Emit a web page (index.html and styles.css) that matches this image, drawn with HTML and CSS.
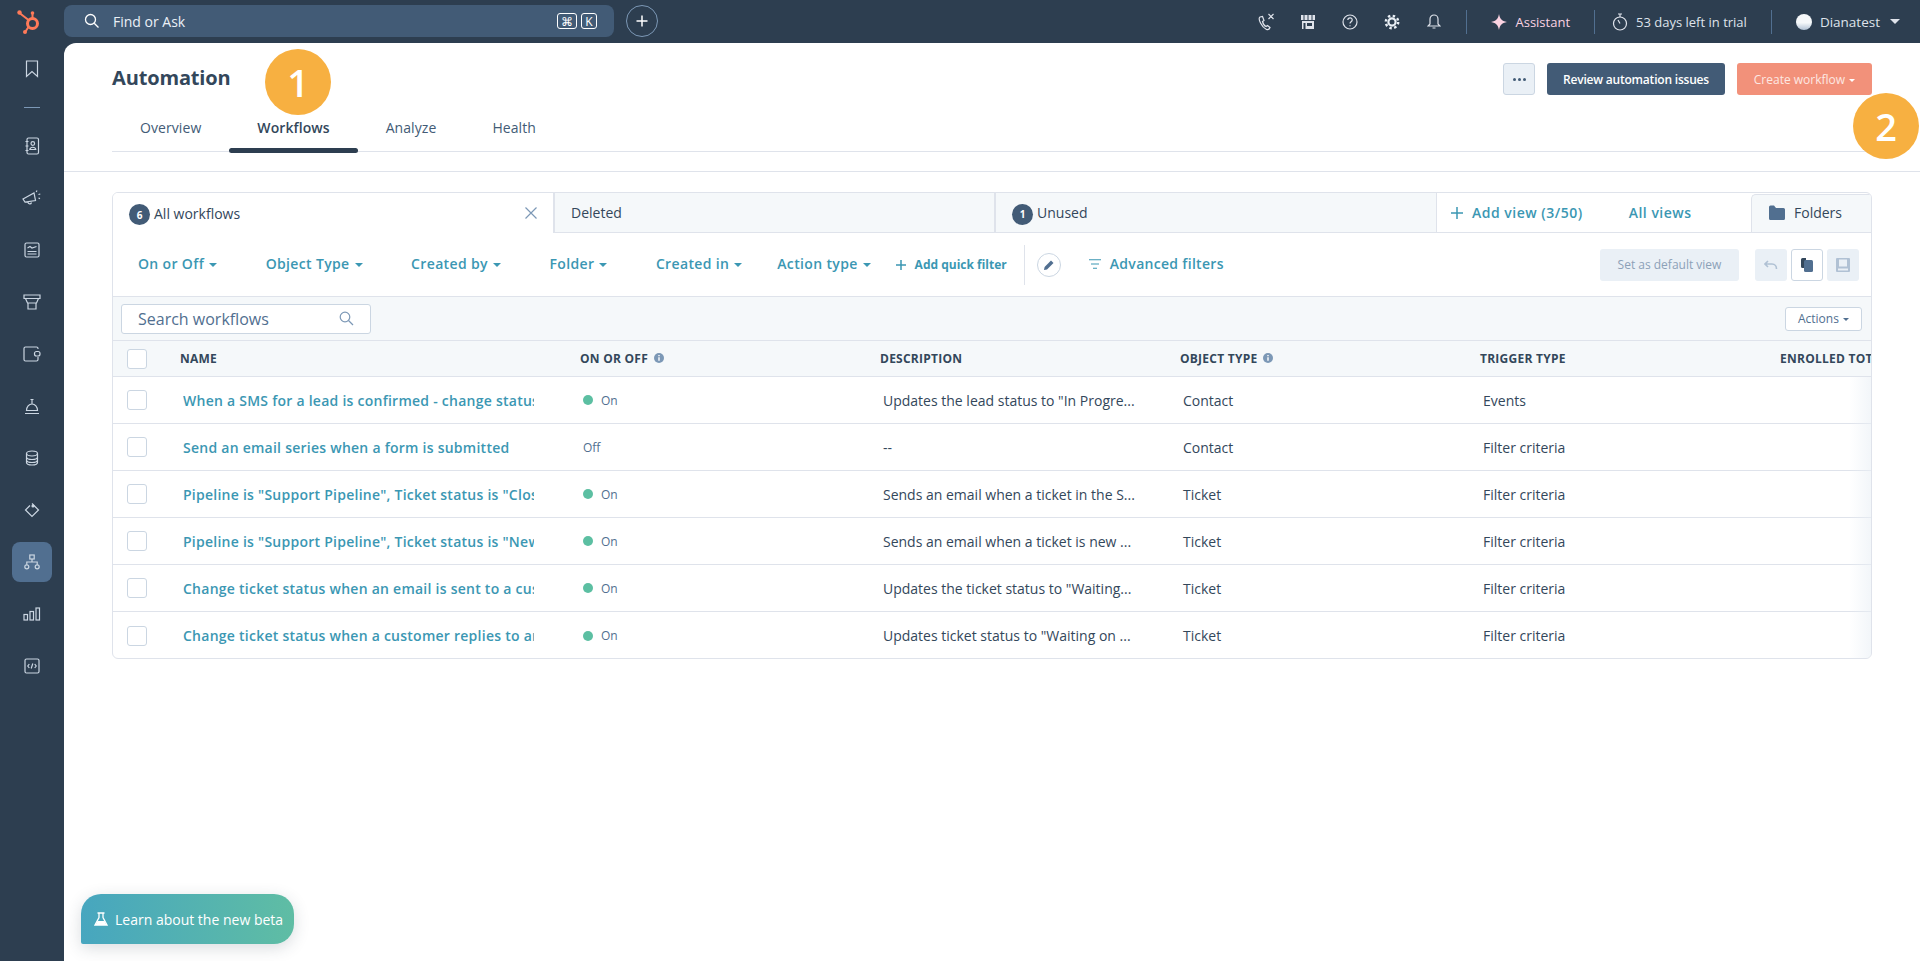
FILE: index.html
```html
<!DOCTYPE html>
<html>
<head>
    <title>Automation</title>
    <link rel="stylesheet" href="styles.css">
</head>
<body>
<div class="app">
    <aside class="sidebar">
        <div class="logo">
            <svg width="26" height="28" viewBox="0 0 26 28" fill="none" stroke="#ff7a59">
                <circle cx="16.5" cy="15.5" r="5" stroke-width="3"/>
                <path d="M3.5 5l9 7M16.500 5v6M12.500 19l-3 4.500" stroke-width="2"/>
                <circle cx="3.500" cy="4.500" r="2.200" fill="#ff7a59" stroke="none"/>
                <circle cx="16.500" cy="5" r="1.800" fill="#ff7a59" stroke="none"/>
                <circle cx="9" cy="24" r="2" fill="#ff7a59" stroke="none"/>
            </svg>
        </div>
        <a class="nav-item">
            <svg width="14" height="18" viewBox="0 0 14 18" class="ico"><path d="M1.500 1h11v15.500L7 11.500l-5.500 5z"/></svg>
        </a>
        <div class="nav-divider"></div>
        <a class="nav-item">
            <svg width="16" height="18" viewBox="0 0 16 18" class="ico"><rect x="3" y="1" width="11.500" height="16" rx="1.500"/><circle cx="8.800" cy="6.500" r="1.800"/><path d="M5.800 12.500c.5-3 5.500-3 6 0zM1.500 4.500h3M1.500 9h3M1.500 13.500h3"/></svg>
        </a>
        <a class="nav-item">
            <svg width="20" height="18" viewBox="0 0 20 18" class="ico"><path d="M1 10l11-6 1.500 7.500-10.500 1.500zM6 13c0 2.500 3 2.500 3.500.5M15 1.500l-.8 1.500M16.500 5.500l1.800-.5M16.500 9l1.500.6"/></svg>
        </a>
        <a class="nav-item">
            <svg width="16" height="16" viewBox="0 0 16 16" class="ico"><rect x="1" y="1" width="14" height="14" rx="1.500"/><path d="M3.500 6l2.500-1.500 2 1.500 4.500-1.500M3.500 9.500h9M3.500 12h9"/></svg>
        </a>
        <a class="nav-item">
            <svg width="18" height="18" viewBox="0 0 18 18" class="ico"><path d="M1 2h16v3.500H1zM2.500 5.500L4.500 10h9l2-4.500M5 10v6h8v-6"/></svg>
        </a>
        <a class="nav-item">
            <svg width="18" height="16" viewBox="0 0 18 16" class="ico"><path d="M15 3V2.500A1.500 1.500 0 0 0 13.500 1h-11A1.500 1.500 0 0 0 1 2.500v11A1.500 1.500 0 0 0 2.500 15h11a1.500 1.500 0 0 0 1.500-1.500V11"/><rect x="11.500" y="5.500" width="5.500" height="4.500" rx="2"/></svg>
        </a>
        <a class="nav-item">
            <svg width="16" height="18" viewBox="0 0 16 18" class="ico"><path d="M2.500 13.500a5.500 6.500 0 0 1 11 0zM1 16.500h14M8 7V3M6.500 2.500h3"/></svg>
        </a>
        <a class="nav-item">
            <svg width="14" height="16" viewBox="0 0 14 16" class="ico"><ellipse cx="7" cy="3.500" rx="5.500" ry="2.500"/><path d="M1.500 3.500v9c0 1.400 2.500 2.500 5.500 2.500s5.500-1.100 5.500-2.500v-9M1.500 7c0 1.400 2.500 2.500 5.500 2.500s5.500-1.100 5.500-2.500M1.500 10c0 1.400 2.500 2.500 5.500 2.500s5.500-1.100 5.500-2.500"/></svg>
        </a>
        <a class="nav-item">
            <svg width="16" height="16" viewBox="0 0 16 16" class="ico"><path d="M8 1.500L14.500 8 8 14.500 1.500 8 6 3.500"/><circle cx="9" cy="4" r="1" fill="#fff"/></svg>
        </a>
        <a class="nav-item active">
            <svg width="16" height="16" viewBox="0 0 16 16" class="ico"><rect x="5.800" y="1" width="4.400" height="4"/><circle cx="2.800" cy="12.800" r="2"/><circle cx="13.200" cy="12.800" r="2"/><path d="M8 5v3M2.800 10.800V8h10.400v2.800"/></svg>
        </a>
        <a class="nav-item">
            <svg width="18" height="14" viewBox="0 0 18 14" class="ico"><rect x="1" y="7.500" width="3.500" height="5.500"/><rect x="7" y="4.500" width="3.500" height="8.500"/><rect x="13" y="1" width="3.500" height="12"/></svg>
        </a>
        <a class="nav-item">
            <svg width="16" height="16" viewBox="0 0 16 16" class="ico"><rect x="1" y="1" width="14" height="14" rx="1.500"/><path d="M5.300 6L3.800 8l1.500 2M10.700 6l1.500 2-1.500 2M8.800 5.500l-1.600 5"/></svg>
        </a>
    </aside>

    <div class="content">
        <header class="topbar">
            <div class="global-search">
                <svg width="16" height="16" viewBox="0 0 16 16" class="search-ico"><circle cx="6.500" cy="6.500" r="5"/><path d="M10.200 10.200l4.300 4.300"/></svg>
                <span class="search-text">Find or Ask</span>
                <span class="kbd">⌘</span>
                <span class="kbd kbd-k">K</span>
            </div>
            <button class="add-btn">
                <svg width="14" height="14" viewBox="0 0 14 14"><path d="M7 1.500v11M1.500 7h11" stroke="#fff" stroke-width="1.500"/></svg>
            </button>
            <div class="top-right">
                <span class="top-icon">
                    <svg width="18" height="18" viewBox="0 0 18 18" class="ico light"><path d="M3 4c-1.500 1-1 3 .5 6s4 5.500 6 6.500c1.500.5 3-.5 3.500-2l-2.500-2-1.500 1c-1.500-.5-3-3-3.500-5l1.500-1L5.500 3.500zM11.500 1l5 5M16.500 1l-5 5"/></svg>
                </span>
                <span class="top-icon">
                    <svg width="16" height="16" viewBox="0 0 16 16"><path d="M1 1h14v5H1z" fill="#dfe3eb"/><path d="M4 1v5M8 1v5M12 1v5" stroke="#2d3e50"/><path d="M2 7h12v8H2z" fill="#dfe3eb"/><rect x="7" y="9" width="5" height="3" fill="#2d3e50"/><rect x="3.500" y="9" width="2" height="6" fill="#2d3e50"/></svg>
                </span>
                <span class="top-icon">
                    <svg width="16" height="16" viewBox="0 0 16 16" class="ico light"><circle cx="8" cy="8" r="7"/><path d="M5.800 6c.2-3 4.600-2.800 4.400 0 0 1.800-2.200 1.700-2.200 3.600M8 11.300v1"/></svg>
                </span>
                <span class="top-icon">
                    <svg width="16" height="16" viewBox="0 0 16 16" class="ico gear"><circle cx="8" cy="8" r="3.600" stroke-width="2.200"/><circle cx="8" cy="8" r="6.200" stroke-dasharray="2.400 2.470" stroke-width="2.400"/></svg>
                </span>
                <span class="top-icon">
                    <svg width="14" height="17" viewBox="0 0 14 17" class="ico light"><path d="M3 11V6a4 4 0 0 1 8 0v5l2 2H1zM5.500 15h3"/></svg>
                </span>
                <span class="top-sep first"></span>
                <span class="assistant">
                    <svg width="16" height="16" viewBox="0 0 16 16"><path d="M8 0c.8 4.500 2.500 7 8 8-5.500 1-7.200 3.500-8 8-.8-4.500-2.500-7-8-8 5.500-1 7.200-3.500 8-8z" fill="#fbd3e2"/></svg>
                    Assistant
                </span>
                <span class="top-sep"></span>
                <span class="trial">
                    <svg width="16" height="18" viewBox="0 0 16 18" class="ico light"><circle cx="8" cy="10.500" r="6.500"/><path d="M6 1h4M8 1v3M8 10.500L6 7"/></svg>
                    53 days left in trial
                </span>
                <span class="top-sep"></span>
                <span class="user">
                    <span class="avatar"></span>
                    Dianatest
                    <i class="caret caret-light"></i>
                </span>
            </div>
        </header>

        <main class="main">
            <section class="page-head">
                <div class="title-row">
                    <h1>Automation</h1>
                    <div class="head-actions">
                        <button class="btn-more"><i></i><i></i><i></i></button>
                        <button class="btn-dark">Review automation issues</button>
                        <button class="btn-create">Create workflow <i class="caret caret-white"></i></button>
                    </div>
                </div>
                <nav class="tabs">
                    <a>Overview</a>
                    <a class="current">Workflows</a>
                    <a>Analyze</a>
                    <a>Health</a>
                </nav>
            </section>

            <section class="card">
                <div class="view-tabs">
                    <div class="view-tab selected">
                        <span class="badge">6</span>All workflows
                        <svg width="12" height="12" viewBox="0 0 12 12" class="close"><path d="M.5.500l11 11M11.500.500l-11 11"/></svg>
                    </div>
                    <div class="view-tab">Deleted</div>
                    <div class="view-tab last"><span class="badge">1</span>Unused</div>
                    <a class="add-view">
                        <svg width="12" height="12" viewBox="0 0 12 12"><path d="M6 0v12M0 6h12" stroke="#3b97b3" stroke-width="1.500"/></svg>
                        Add view (3/50)
                    </a>
                    <a class="all-views">All views</a>
                    <div class="folders">
                        <svg width="16" height="15" viewBox="0 0 16 15"><path d="M0 2a1.500 1.500 0 0 1 1.500-1.500H5L7 3h7.500A1.500 1.500 0 0 1 16 4.500v9a1.500 1.500 0 0 1-1.500 1.500h-13A1.500 1.500 0 0 1 0 13.500z" fill="#516f90"/></svg>
                        Folders
                    </div>
                </div>

                <div class="filters">
                    <a class="filter">On or Off <i class="caret"></i></a>
                    <a class="filter">Object Type <i class="caret"></i></a>
                    <a class="filter">Created by <i class="caret"></i></a>
                    <a class="filter">Folder <i class="caret"></i></a>
                    <a class="filter near">Created in <i class="caret"></i></a>
                    <a class="filter tight">Action type <i class="caret"></i></a>
                    <a class="quick">
                        <svg width="10" height="10" viewBox="0 0 10 10"><path d="M5 0v10M0 5h10" stroke="#3b97b3" stroke-width="1.500"/></svg>
                        Add quick filter
                    </a>
                    <span class="filter-sep"></span>
                    <span class="pencil">
                        <svg width="12" height="12" viewBox="0 0 12 12"><path d="M1 11l.6-3L8 1.500l2.500 2.500L4 10.500z" fill="#516f90"/></svg>
                    </span>
                    <a class="advanced">
                        <svg width="12" height="10" viewBox="0 0 12 10"><path d="M0 .75h12M2 5h8M4 9.250h4" stroke="#3b97b3" stroke-width="1.200"/></svg>
                        Advanced filters
                    </a>
                    <div class="view-actions">
                        <button class="btn-default">Set as default view</button>
                        <button class="btn-icon">
                            <svg width="14" height="10" viewBox="0 0 14 10" fill="none"><path d="M1 4h7c3 0 4.500 2.500 4.500 5M4 1L1 4l3 3" stroke="#b0c1d4" stroke-width="1.600"/></svg>
                        </button>
                        <button class="btn-icon on">
                            <svg width="12" height="15" viewBox="0 0 12 15"><path d="M0 2.500A1.500 1.500 0 0 1 1.500 1H5v10H1.500A1.500 1.500 0 0 1 0 9.500z" fill="#33475b"/><rect x="3" y="3" width="9" height="12" rx="1.500" fill="#516f90"/></svg>
                        </button>
                        <button class="btn-icon">
                            <svg width="14" height="14" viewBox="0 0 14 14"><path d="M0 1a1 1 0 0 1 1-1h12a1 1 0 0 1 1 1v12a1 1 0 0 1-1 1H1a1 1 0 0 1-1-1z" fill="#b0c1d4"/><rect x="3" y="1.500" width="8" height="7" fill="#eaf0f6"/><rect x="2" y="10.500" width="10" height="2" fill="#eaf0f6"/></svg>
                        </button>
                    </div>
                </div>

                <div class="table-tools">
                    <div class="table-search">
                        Search workflows
                        <svg width="15" height="15" viewBox="0 0 15 15" class="table-search-ico"><circle cx="6" cy="6" r="4.800"/><path d="M9.500 9.500l4.500 4.500"/></svg>
                    </div>
                    <button class="btn-actions">Actions <i class="caret caret-slate"></i></button>
                </div>

                <div class="table">
                    <div class="row head">
                        <span class="cell c-check"><i class="box"></i></span>
                        <span class="cell c-name">NAME</span>
                        <span class="cell">ON OR OFF <svg class="info" width="10" height="10" viewBox="0 0 10 10"><circle cx="5" cy="5" r="5" fill="#7c98b6"/><path d="M5 4.300v3.500M5 2v1.300" stroke="#fff" stroke-width="1.400"/></svg></span>
                        <span class="cell">DESCRIPTION</span>
                        <span class="cell">OBJECT TYPE <svg class="info" width="10" height="10" viewBox="0 0 10 10"><circle cx="5" cy="5" r="5" fill="#7c98b6"/><path d="M5 4.300v3.500M5 2v1.300" stroke="#fff" stroke-width="1.400"/></svg></span>
                        <span class="cell">TRIGGER TYPE</span>
                        <span class="cell">ENROLLED TOTAL</span>
                    </div>
                    <div class="row">
                        <span class="cell c-check"><i class="box"></i></span>
                        <span class="cell c-name"><a>When a SMS for a lead is confirmed - change status</a></span>
                        <span class="cell"><i class="dot"></i><span class="status">On</span></span>
                        <span class="cell">Updates the lead status to "In Progre...</span>
                        <span class="cell">Contact</span>
                        <span class="cell">Events</span>
                        <span class="cell"></span>
                    </div>
                    <div class="row">
                        <span class="cell c-check"><i class="box"></i></span>
                        <span class="cell c-name"><a>Send an email series when a form is submitted</a></span>
                        <span class="cell"><span class="status">Off</span></span>
                        <span class="cell">--</span>
                        <span class="cell">Contact</span>
                        <span class="cell">Filter criteria</span>
                        <span class="cell"></span>
                    </div>
                    <div class="row">
                        <span class="cell c-check"><i class="box"></i></span>
                        <span class="cell c-name"><a>Pipeline is "Support Pipeline", Ticket status is "Closed"</a></span>
                        <span class="cell"><i class="dot"></i><span class="status">On</span></span>
                        <span class="cell">Sends an email when a ticket in the S...</span>
                        <span class="cell">Ticket</span>
                        <span class="cell">Filter criteria</span>
                        <span class="cell"></span>
                    </div>
                    <div class="row">
                        <span class="cell c-check"><i class="box"></i></span>
                        <span class="cell c-name"><a>Pipeline is "Support Pipeline", Ticket status is "New"</a></span>
                        <span class="cell"><i class="dot"></i><span class="status">On</span></span>
                        <span class="cell">Sends an email when a ticket is new ...</span>
                        <span class="cell">Ticket</span>
                        <span class="cell">Filter criteria</span>
                        <span class="cell"></span>
                    </div>
                    <div class="row">
                        <span class="cell c-check"><i class="box"></i></span>
                        <span class="cell c-name"><a>Change ticket status when an email is sent to a customer</a></span>
                        <span class="cell"><i class="dot"></i><span class="status">On</span></span>
                        <span class="cell">Updates the ticket status to "Waiting...</span>
                        <span class="cell">Ticket</span>
                        <span class="cell">Filter criteria</span>
                        <span class="cell"></span>
                    </div>
                    <div class="row">
                        <span class="cell c-check"><i class="box"></i></span>
                        <span class="cell c-name"><a>Change ticket status when a customer replies to an email</a></span>
                        <span class="cell"><i class="dot"></i><span class="status">On</span></span>
                        <span class="cell">Updates ticket status to "Waiting on ...</span>
                        <span class="cell">Ticket</span>
                        <span class="cell">Filter criteria</span>
                        <span class="cell"></span>
                    </div>
                </div>
            </section>

            <span class="marker marker-one">1</span>
            <span class="marker marker-two">2</span>

            <a class="beta">
                <svg width="14" height="14" viewBox="0 0 14 14"><path d="M3.500 1h7M5 1v4.500L1 13h12L9 5.500V1" fill="none" stroke="#fff" stroke-width="1.300"/><path d="M3.500 9h7l2 4h-11z" fill="#fff"/></svg>
                Learn about the new beta
            </a>
        </main>
    </div>
</div>
</body>
</html>
```

FILE: styles.css
```css
* {
    box-sizing: border-box;
}

body {
    margin: 0;
    background: #2d3e50;
    color: #33475b;
    font-family: "Open Sans", "Noto Sans", sans-serif;
    font-size: 14px;
    overflow: hidden;
}

button {
    font-family: inherit;
    border: 0;
    padding: 0;
}

.app {
    display: flex;
    height: 961px;
}

/* sidebar */
.sidebar {
    width: 64px;
    flex: none;
    display: flex;
    flex-direction: column;
    align-items: center;
}

.logo {
    height: 43px;
    display: flex;
    align-items: center;
    margin-left: -6px;
}

.nav-item {
    width: 40px;
    height: 40px;
    margin: 6px 0;
    display: flex;
    align-items: center;
    justify-content: center;
    border-radius: 8px;
}

.nav-item.active {
    background: #516f90;
}

.nav-divider {
    width: 16px;
    height: 1px;
    margin: 12px 0;
    background: #7c98b6;
}

.ico {
    fill: none;
    stroke: #cbd6e2;
    stroke-width: 1.200;
}

.ico.light {
    stroke: #dfe3eb;
}

.ico.gear {
    stroke: #eaf0f6;
}

/* top bar */
.content {
    flex: 1;
    min-width: 0;
    display: flex;
    flex-direction: column;
}

.topbar {
    height: 43px;
    flex: none;
    display: flex;
    align-items: center;
    color: #dfe3eb;
    font-size: 13px;
}

.global-search {
    width: 550px;
    height: 32px;
    margin-top: -1px;
    padding: 0 17px 0 20px;
    display: flex;
    align-items: center;
    background: #425b76;
    border-radius: 8px;
    color: #eaf0f6;
    font-size: 14px;
}

.search-ico {
    fill: none;
    stroke: #fff;
    stroke-width: 1.300;
    margin-right: 13px;
}

.search-text {
    flex: 1;
}

.kbd {
    width: 20px;
    height: 16px;
    display: flex;
    align-items: center;
    justify-content: center;
    border: 1px solid #fff;
    border-radius: 3px;
    font-size: 12px;
    color: #fff;
}

.kbd-k {
    width: 16px;
    margin-left: 4px;
}

.add-btn {
    width: 32px;
    height: 32px;
    margin: -1px 0 0 12px;
    display: flex;
    align-items: center;
    justify-content: center;
    background: none;
    border: 1px solid #7c98b6;
    border-radius: 50%;
}

.top-right {
    margin-left: auto;
    padding-right: 20px;
    display: flex;
    align-items: center;
}

.top-icon {
    width: 42px;
    display: flex;
    justify-content: center;
}

.top-sep {
    width: 1px;
    height: 24px;
    margin: 0 24px;
    background: #516f90;
}

.top-sep.first {
    margin-left: 11px;
}

.assistant,
.trial,
.user {
    display: flex;
    align-items: center;
    gap: 8px;
    white-space: nowrap;
}

.assistant {
    color: #fbd3e2;
}

.trial {
    margin-left: -7px;
}

.avatar {
    width: 16px;
    height: 16px;
    border-radius: 50%;
    background: linear-gradient(180deg, #f5f8fa 55%, #b0c1d4 100%);
}

.user {
    font-size: 13.500px;
}

/* carets */
.caret {
    display: inline-block;
    width: 0;
    height: 0;
    border-left: 4px solid transparent;
    border-right: 4px solid transparent;
    border-top: 4px solid #3b97b3;
    vertical-align: middle;
    margin-left: 1px;
}

.caret-light {
    border-top-color: #dfe3eb;
    margin-left: 2px;
    border-left-width: 5px;
    border-right-width: 5px;
    border-top-width: 5px;
}

.caret-white {
    border-top-color: #fff;
    border-left-width: 3px;
    border-right-width: 3px;
    border-top-width: 3px;
}

.caret-slate {
    border-top-color: #516f90;
    border-left-width: 3px;
    border-right-width: 3px;
    border-top-width: 3px;
}

/* main */
.main {
    flex: 1;
    position: relative;
    background: #fff;
    border-top-left-radius: 12px;
}

.page-head {
    height: 129px;
    padding: 20px 48px 0;
    border-bottom: 1px solid #dfe3eb;
}

.title-row {
    display: flex;
    align-items: center;
    justify-content: space-between;
    height: 32px;
}

h1 {
    margin: -3px 0 0;
    font-size: 20px;
    font-weight: 700;
    letter-spacing: -0.15px;
    color: #33475b;
}

.head-actions {
    display: flex;
    gap: 12px;
}

.head-actions button {
    height: 32px;
    border-radius: 3px;
    font-size: 12px;
}

.btn-more {
    width: 32px;
    display: flex;
    align-items: center;
    justify-content: center;
    gap: 2px;
    background: #eaf0f6;
    border: 1px solid #cbd6e2 !important;
}

.btn-more i {
    width: 3px;
    height: 3px;
    border-radius: 50%;
    background: #425b76;
}

.btn-dark {
    width: 178px;
    background: #425b76;
    color: #fff;
    font-weight: 600;
    letter-spacing: -0.2px;
}

.btn-create {
    width: 135px;
    background: #f2917a;
    color: #fde8e2;
}

.tabs {
    height: 57px;
    display: flex;
    border-bottom: 1px solid #dfe3eb;
    margin-bottom: -1px;
}

.tabs a {
    position: relative;
    padding: 8px 28px 0;
    height: 56px;
    display: flex;
    align-items: center;
    letter-spacing: 0.08px;
    color: #425b76;
}

.tabs a.current {
    font-weight: 600;
    color: #33475b;
}

.tabs a.current::after {
    content: "";
    position: absolute;
    left: 0;
    right: 0;
    bottom: -2px;
    height: 5px;
    border-radius: 3px;
    background: #2d3e50;
}

/* card */
.card {
    margin: 20px 48px 0;
    height: 467px;
    border: 1px solid #dfe3eb;
    border-radius: 6px;
    overflow: hidden;
}

.view-tabs {
    height: 40px;
    display: flex;
    align-items: stretch;
    border-bottom: 1px solid #dfe3eb;
}

.view-tab {
    width: 441px;
    padding: 0 16px;
    display: flex;
    align-items: center;
    background: #f5f8fa;
    border-right: 2px solid #dfe3eb;
    color: #33475b;
    font-size: 14px;
}

.view-tab.selected {
    position: relative;
    z-index: 1;
    width: 442px;
    height: 40px;
    background: #fff;
    border-right: 2px solid #dfe3eb;
}

.view-tab.last {
    border-right: 1px solid #dfe3eb;
}

.badge {
    width: 21px;
    height: 21px;
    margin: 3px 4px 0 0;
    flex: none;
    display: flex;
    align-items: center;
    justify-content: center;
    border-radius: 50%;
    background: #425b76;
    color: #fff;
    font-size: 10px;
    font-weight: 700;
}

.close {
    margin-left: auto;
    fill: none;
    stroke: #7c98b6;
    stroke-width: 1.200;
}

.add-view,
.all-views {
    display: flex;
    align-items: center;
    gap: 9px;
    color: #3b97b3;
    font-weight: 600;
    font-size: 14px;
    letter-spacing: 0.5px;
    white-space: nowrap;
}

.add-view {
    margin-left: 14px;
}

.all-views {
    margin-left: 46px;
}

.folders {
    width: 120px;
    margin: 1px 0 0 auto;
    padding: 0 0 2px 17px;
    display: flex;
    align-items: center;
    gap: 9px;
    background: #f5f8fa;
    border-left: 1px solid #dfe3eb;
    border-top: 1px solid #dfe3eb;
    border-top-left-radius: 5px;
}

.filters {
    height: 64px;
    padding: 0 12px 0 25px;
    display: flex;
    align-items: center;
    border-bottom: 1px solid #dfe3eb;
}

.filter {
    margin: -2px 48.600px 0 0;
    color: #3b97b3;
    font-weight: 600;
    font-size: 14px;
    letter-spacing: 0.35px;
    white-space: nowrap;
}

.filter.near {
    margin-right: 35px;
}

.filter.tight {
    margin-right: 25px;
}

.quick {
    display: flex;
    align-items: center;
    gap: 9px;
    color: #3b97b3;
    font-weight: 700;
    font-size: 12px;
    white-space: nowrap;
}

.filter-sep {
    width: 1px;
    height: 40px;
    margin: 0 12px 0 17px;
    background: #dfe3eb;
}

.pencil {
    width: 24px;
    height: 24px;
    display: flex;
    align-items: center;
    justify-content: center;
    border: 1px solid #cbd6e2;
    border-radius: 50%;
}

.advanced {
    margin: -2px 0 0 28px;
    display: flex;
    align-items: center;
    gap: 9px;
    color: #3b97b3;
    font-weight: 600;
    font-size: 14px;
    letter-spacing: 0.3px;
    white-space: nowrap;
}

.view-actions {
    margin-left: auto;
    display: flex;
    gap: 4px;
}

.btn-default {
    width: 139px;
    height: 32px;
    margin-right: 12px;
    background: #eaf0f6;
    border-radius: 3px;
    color: #8ca1b8;
    font-size: 12px;
}

.btn-icon {
    width: 32px;
    height: 32px;
    display: flex;
    align-items: center;
    justify-content: center;
    background: #eaf0f6;
    border-radius: 3px;
}

.btn-icon.on {
    background: #fff;
    border: 1px solid #cbd6e2;
}

.table-tools {
    height: 44px;
    padding: 0 9px 0 8px;
    display: flex;
    align-items: center;
    justify-content: space-between;
    background: #f5f8fa;
    border-bottom: 1px solid #dfe3eb;
}

.table-search {
    width: 250px;
    height: 30px;
    padding: 0 16px 0 16px;
    display: flex;
    align-items: center;
    justify-content: space-between;
    background: #fff;
    border: 1px solid #cbd6e2;
    border-radius: 3px;
    color: #516f90;
    font-size: 16px;
}

.table-search-ico {
    fill: none;
    stroke: #7c98b6;
    stroke-width: 1.200;
}

.btn-actions {
    width: 77px;
    height: 24px;
    background: #fff;
    border: 1px solid #cbd6e2;
    border-radius: 3px;
    color: #516f90;
    font-size: 12px;
}

/* table */
.table {
    position: relative;
}

.table::after {
    content: "";
    position: absolute;
    top: 36px;
    right: 0;
    bottom: 0;
    width: 22px;
    background: linear-gradient(90deg, rgba(245, 248, 250, 0), rgba(234, 240, 246, 0.6));
}

.row {
    display: grid;
    grid-template-columns: 54px 413px 300px 300px 300px 300px 300px;
    height: 47px;
    align-items: center;
    border-bottom: 1px solid #dfe3eb;
    white-space: nowrap;
}

.row:last-child {
    border-bottom: 0;
}

.row .cell {
    padding-left: 3px;
    display: flex;
    align-items: center;
}

.row.head {
    height: 36px;
    background: #f5f8fa;
    font-size: 12px;
    font-weight: 700;
    letter-spacing: 0.25px;
    color: #33475b;
}

.row.head .cell {
    padding-left: 0;
}

.row .c-check {
    padding-left: 14px;
}

.row.head .c-check {
    padding-left: 14px;
}

.row .c-name {
    padding-left: 16px;
}

.row.head .c-name {
    padding-left: 13px;
}

.box {
    width: 20px;
    height: 20px;
    background: #fff;
    border: 1px solid #cbd6e2;
    border-radius: 3px;
}

.c-name a {
    width: 351px;
    overflow: hidden;
    color: #3b97b3;
    font-weight: 600;
    letter-spacing: 0.25px;
}

.info {
    margin: -2px 0 0 6px;
}

.dot {
    width: 10px;
    height: 10px;
    margin-right: 8px;
    border-radius: 50%;
    background: #5cbfa2;
}

.status {
    font-size: 12px;
    color: #516f90;
}

/* annotations */
.marker {
    position: absolute;
    width: 66px;
    height: 66px;
    display: flex;
    align-items: center;
    justify-content: center;
    border-radius: 50%;
    background: #f7b041;
    color: #fff;
    font-size: 38px;
    font-weight: 600;
}

.marker-one {
    left: 201px;
    top: 6px;
}

.marker-two {
    left: 1789px;
    top: 50px;
}

.beta {
    position: absolute;
    left: 17px;
    top: 851px;
    width: 213px;
    height: 50px;
    display: flex;
    align-items: center;
    gap: 7px;
    padding-left: 13px;
    background: linear-gradient(90deg, #47a6bf, #5fbda4);
    border-radius: 20px 20px 20px 2px;
    box-shadow: 0 4px 16px rgba(45, 62, 80, 0.18);
    color: #fff;
    font-size: 14px;
    white-space: nowrap;
}
```
